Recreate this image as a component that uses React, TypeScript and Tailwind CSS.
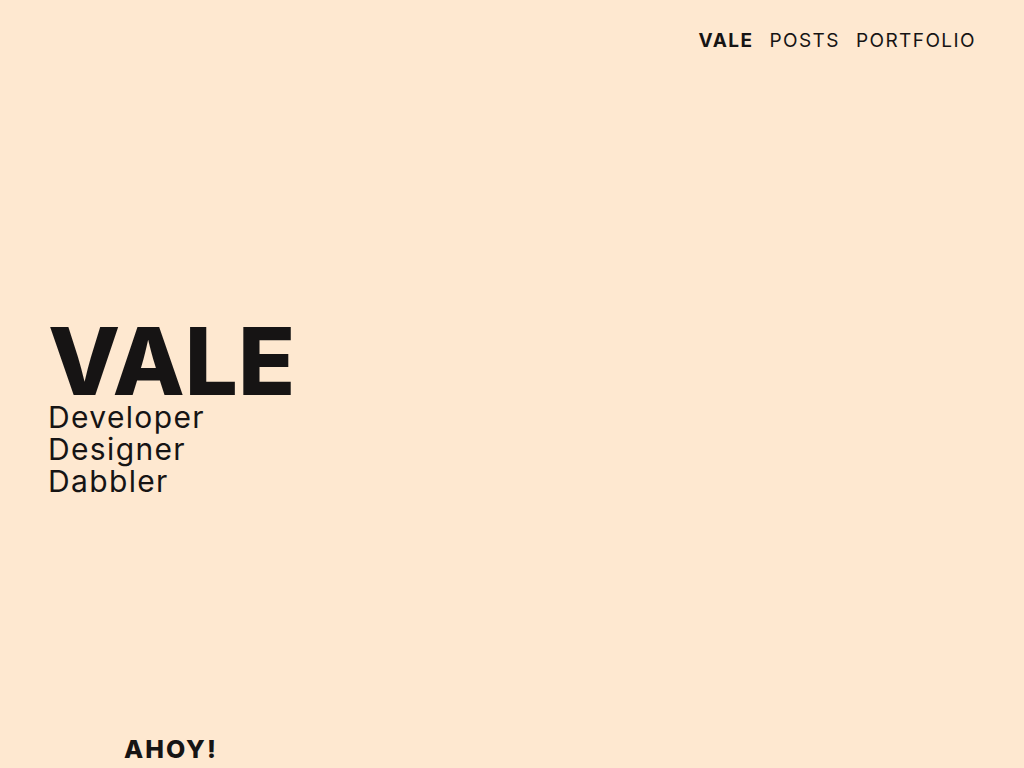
const links = [
  { label: "VALE", bold: true },
  { label: "POSTS", bold: false },
  { label: "PORTFOLIO", bold: false },
];

const roles = ["Developer", "Designer", "Dabbler"];

export default function App() {
  return (
    <div
      className="min-h-screen bg-[#fee8d0] text-[#161414]"
      style={{ fontFamily: "Inter, 'Noto Sans', sans-serif" }}
    >
      <section className="h-[734px] flex flex-col">
        <header className="flex justify-end px-12 pt-[28px]">
          <nav className="flex gap-[16px] text-[19px] leading-[26px] tracking-[0.075em]">
            {links.map((l) => (
              <a key={l.label} href="#" className={l.bold ? "font-bold" : "font-normal"}>
                {l.label}
              </a>
            ))}
          </nav>
        </header>
        <div className="flex-1 flex items-center px-12">
          <div className="mt-[30px]">
            <h1 className="text-[94px] leading-[80px] font-extrabold tracking-[0]">VALE</h1>
            <ul className="text-[30px] leading-[32px] font-normal tracking-[0.045em]">
              {roles.map((r) => (
                <li key={r}>{r}</li>
              ))}
            </ul>
          </div>
        </div>
      </section>
      <section className="pl-[124px] pb-20">
        <h2 className="text-[25px] leading-[30px] font-extrabold tracking-[0.08em]">AHOY!</h2>
      </section>
    </div>
  );
}
